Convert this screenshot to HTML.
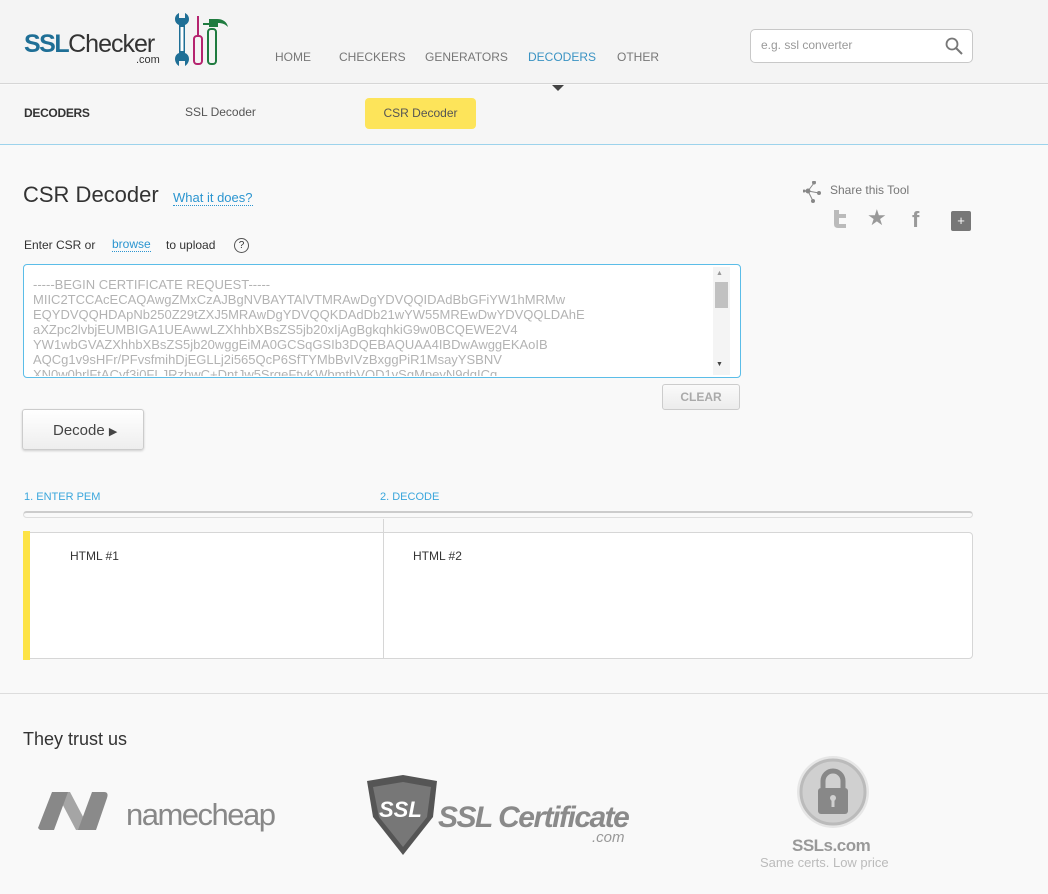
<!DOCTYPE html>
<html><head><meta charset="utf-8"><style>
*{box-sizing:border-box;margin:0;padding:0}
body{width:1048px;height:894px;background:#f9f9f9;font-family:"Liberation Sans",sans-serif;position:relative;overflow:hidden;color:#333}
.a{position:absolute}
#hdr{left:0;top:0;width:1048px;height:84px;background:#f4f4f4;border-bottom:1px solid #d6d6d6}
.nav{top:50px;font-size:12px;color:#777}
#sub{left:0;top:85px;width:1048px;height:60px;background:#f6f6f6;border-bottom:1px solid #9dd3ec}
</style></head><body>
<div id="hdr" class="a"></div>
<div id="sub" class="a"></div>
<div class="a" style="left:24px;top:30px;font-size:25px;letter-spacing:-1px;color:#333"><b style="color:#1f6f96;letter-spacing:-1.5px">SSL</b>Checker</div>
<div class="a" style="left:136px;top:54px;font-size:11px;color:#333">.com</div>
<svg class="a" style="left:170px;top:13px" width="60" height="54" viewBox="0 0 60 54">
<path d="M5 6a6 6 0 0 0 4 6v28a6 6 0 0 0 -4 6c0 3 2 6 4 7v-5h6v5c2-1 4-4 4-7a6 6 0 0 0 -4-6v-28a6 6 0 0 0 4-6c0-3-2-5-4-6v5h-6v-5c-2 1-4 3-4 6z" fill="#1f6f96"/>
<rect x="10.5" y="14" width="3" height="24" fill="#fff"/>
<rect x="27" y="3" width="2" height="20" fill="#b5246f"/><rect x="24" y="23" width="8" height="28" rx="3" fill="none" stroke="#b5246f" stroke-width="2"/>
<path d="M33 10h6v-4h8c6 0 10 3 11 8-3-3-6-4-10-4v4h-9v-2h-6z" fill="#1f7b3f"/><rect x="38" y="16" width="8" height="35" rx="3" fill="none" stroke="#1f7b3f" stroke-width="2"/>
</svg>
<div class="a nav" style="left:275px">HOME</div>
<div class="a nav" style="left:339px">CHECKERS</div>
<div class="a nav" style="left:425px">GENERATORS</div>
<div class="a nav" style="left:528px;color:#3a93c3">DECODERS</div>
<div class="a nav" style="left:617px">OTHER</div>
<div class="a" style="left:552px;top:85px;width:0;height:0;border-left:6px solid transparent;border-right:6px solid transparent;border-top:6px solid #444"></div>
<div class="a" style="left:750px;top:29px;width:223px;height:34px;background:#fff;border:1px solid #c8c8c8;border-radius:5px"></div>
<div class="a" style="left:761px;top:38px;font-size:12px;color:#999">e.g. ssl converter</div>
<svg class="a" style="left:945px;top:37px" width="18" height="18"><circle cx="7" cy="7" r="5.5" fill="none" stroke="#777" stroke-width="1.8"/><path d="M11 11l6 6" stroke="#777" stroke-width="2"/></svg>
<div class="a" style="left:24px;top:106px;font-size:12px;color:#333;font-weight:bold;letter-spacing:-.3px">DECODERS</div>
<div class="a" style="left:185px;top:105px;font-size:12px;color:#555">SSL Decoder</div>
<div class="a" style="left:365px;top:98px;width:111px;height:31px;background:#fde45a;border-radius:4px;font-size:12px;color:#555;text-align:center;line-height:30px">CSR Decoder</div>
<div class="a" style="left:23px;top:182px;font-size:22px;color:#333">CSR Decoder</div>
<div class="a" style="left:173px;top:190px;font-size:13px;color:#2b95d0;border-bottom:1px dotted #2b95d0">What it does?</div>
<svg class="a" style="left:803px;top:181px" width="18" height="22"><g fill="#888" stroke="#888"><circle cx="5" cy="10" r="2"/><circle cx="11" cy="1.5" r="1.5"/><circle cx="1" cy="10" r="1"/><circle cx="16" cy="12" r="1.5"/><circle cx="10" cy="20" r="1.5"/><path d="M5 10L11 2M5 10L16 12M5 10L10 20M5 10H1" fill="none"/></g></svg>
<div class="a" style="left:830px;top:183px;font-size:12px;color:#777">Share this Tool</div>
<svg class="a" style="left:831px;top:210px" width="16" height="19"><path d="M3 0v14q0 4 4 4h8v-4h-7v-6h7v-4h-7v-4z" fill="#bbb"/></svg>
<div class="a" style="left:867px;top:205px;font-size:22px;color:#999">★</div>
<div class="a" style="left:912px;top:207px;font-size:22px;font-weight:bold;color:#999">f</div>
<div class="a" style="left:951px;top:211px;width:20px;height:20px;background:#777;border-radius:2px;color:#fff;font-size:13px;text-align:center;line-height:20px">+</div>
<div class="a" style="left:24px;top:238px;font-size:12px;color:#333">Enter CSR or</div>
<div class="a" style="left:112px;top:237px;font-size:12px;color:#2b95d0;border-bottom:1px dotted #2b95d0">browse</div>
<div class="a" style="left:166px;top:238px;font-size:12px;color:#333">to upload</div>
<div class="a" style="left:234px;top:238px;width:15px;height:15px;border:1px solid #555;border-radius:50%;font-size:10px;text-align:center;line-height:13px">?</div>
<div class="a" style="left:23px;top:264px;width:718px;height:114px;background:#fff;border:1px solid #5bbde8;border-radius:4px;overflow:hidden"></div>
<div class="a" style="left:33px;top:277px;width:680px;height:99px;overflow:hidden;font-size:13px;line-height:15px;color:#b3b3b3;white-space:pre">-----BEGIN CERTIFICATE REQUEST-----
MIIC2TCCAcECAQAwgZMxCzAJBgNVBAYTAlVTMRAwDgYDVQQIDAdBbGFiYW1hMRMw
EQYDVQQHDApNb250Z29tZXJ5MRAwDgYDVQQKDAdDb21wYW55MREwDwYDVQQLDAhE
aXZpc2lvbjEUMBIGA1UEAwwLZXhhbXBsZS5jb20xIjAgBgkqhkiG9w0BCQEWE2V4
YW1wbGVAZXhhbXBsZS5jb20wggEiMA0GCSqGSIb3DQEBAQUAA4IBDwAwggEKAoIB
AQCg1v9sHFr/PFvsfmihDjEGLLj2i565QcP6SfTYMbBvIVzBxggPiR1MsayYSBNV
XN0w0brlFtACyf3i0FLJRzbwC+DntJw5SrqeFtyKWbmtbVOD1vSgMpeyN9dqICq</div>
<div class="a" style="left:713px;top:267px;width:17px;height:108px;background:#f4f4f4"></div>
<div class="a" style="left:716px;top:270px;font-size:7px;color:#999">▲</div>
<div class="a" style="left:716px;top:361px;font-size:7px;color:#444">▼</div>
<div class="a" style="left:715px;top:282px;width:13px;height:26px;background:#c1c1c1"></div>
<div class="a" style="left:662px;top:384px;width:78px;height:26px;border:1px solid #ccc;border-radius:3px;background:linear-gradient(#fafafa,#ececec);font-size:12px;font-weight:bold;color:#aaa;text-align:center;line-height:24px">CLEAR</div>
<div class="a" style="left:22px;top:409px;width:122px;height:41px;border:1px solid #ccc;border-radius:3px;background:linear-gradient(#fff,#eee);box-shadow:0 1px 2px #ccc;font-size:15px;color:#444;padding:12px 0 0 30px">Decode <span style="font-size:11px">▶</span></div>
<div class="a" style="left:24px;top:491px;font-size:11px;color:#3aa6dc">1. ENTER PEM</div>
<div class="a" style="left:380px;top:491px;font-size:11px;color:#3aa6dc">2. DECODE</div>
<div class="a" style="left:23px;top:511px;width:950px;height:7px;border:1px solid #ddd;border-top:2px solid #ccc;border-radius:4px"></div>
<div class="a" style="left:23px;top:532px;width:950px;height:127px;background:#fff;border:1px solid #d6d6d6;border-radius:0 4px 4px 0"></div>
<div class="a" style="left:23px;top:531px;width:7px;height:129px;background:#fde346"></div>
<div class="a" style="left:383px;top:519px;width:1px;height:140px;background:#d6d6d6"></div>
<div class="a" style="left:70px;top:549px;font-size:12px;color:#333">HTML #1</div>
<div class="a" style="left:413px;top:549px;font-size:12px;color:#333">HTML #2</div>
<div class="a" style="left:0;top:693px;width:1048px;height:1px;background:#ddd"></div>
<div class="a" style="left:23px;top:729px;font-size:18px;color:#333">They trust us</div>
<svg class="a" style="left:34px;top:788px" width="84" height="46"><path d="M22 4h14l20 38h-14z" fill="#a5a5a5"/><path d="M4 40L18 4h16L20 42h-14z" fill="#888"/><path d="M44 42L58 4h12c4 0 4 3 3 6L62 42z" fill="#8a8a8a"/></svg>
<div class="a" style="left:126px;top:797px;font-size:31px;color:#888;letter-spacing:-1.5px">namecheap</div>
<svg class="a" style="left:363px;top:775px" width="74" height="80"><path d="M4 6l36-6 34 6-4 36-30 38-30-38z" fill="#555"/><path d="M10 12l30-5 28 5-4 30-24 30-24-30z" fill="#777"/><text x="16" y="42" font-family="Liberation Sans" font-weight="bold" font-style="italic" font-size="22" fill="#fff">SSL</text></svg>
<div class="a" style="left:438px;top:801px;font-size:30px;font-weight:bold;font-style:italic;color:#8a8a8a;letter-spacing:-1.5px">SSL Certificate</div>
<div class="a" style="left:592px;top:829px;font-size:15px;font-style:italic;color:#999">.com</div>
<svg class="a" style="left:796px;top:755px" width="74" height="74"><circle cx="37" cy="37" r="36" fill="#e6e6e6"/><circle cx="37" cy="37" r="32" fill="#d0d0d0" stroke="#bbb" stroke-width="3"/><path d="M27 34v-8a10 10 0 0 1 20 0v8" fill="none" stroke="#888" stroke-width="5"/><rect x="22" y="33" width="30" height="26" rx="3" fill="#888"/><circle cx="37" cy="43" r="3" fill="#d0d0d0"/><rect x="35.5" y="44" width="3" height="8" fill="#d0d0d0"/></svg>
<div class="a" style="left:792px;top:836px;font-size:17px;font-weight:bold;color:#999;letter-spacing:-.5px">SSLs.com</div>
<div class="a" style="left:760px;top:855px;font-size:13px;color:#bbb">Same certs. Low price</div>
</body></html>
